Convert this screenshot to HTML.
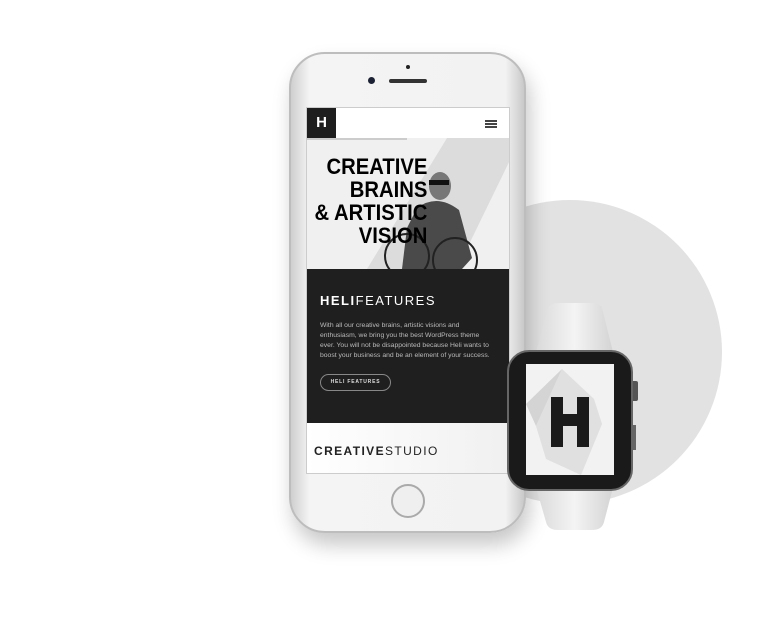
<!DOCTYPE html>
<html><head><style>
*{margin:0;padding:0;box-sizing:border-box}
body{width:783px;height:624px;background:#fff;position:relative;overflow:hidden;font-family:"Liberation Sans",sans-serif}
.a{position:absolute}
</style></head><body>
<div class="a" style="left:418px;top:200px;width:304px;height:304px;border-radius:50%;background:#e2e2e2"></div>
<!-- phone -->
<div class="a" style="left:289px;top:52px;width:237px;height:481px;border-radius:36px;background:linear-gradient(90deg,#cfcfcf,#f4f4f4 8%,#f2f2f2 92%,#c9c9c9);border:2px solid #bdbdbd;box-shadow:4px 12px 20px rgba(0,0,0,.22)"></div>
<div class="a" style="left:368px;top:77px;width:7px;height:7px;border-radius:50%;background:#1c2233"></div>
<div class="a" style="left:406px;top:65px;width:4px;height:4px;border-radius:50%;background:#222"></div>
<div class="a" style="left:389px;top:79px;width:38px;height:4px;border-radius:2px;background:#333"></div>
<div class="a" style="left:391px;top:484px;width:34px;height:34px;border-radius:50%;border:2px solid #aaa;background:#efefef"></div>
<!-- screen -->
<div class="a" style="left:306px;top:107px;width:204px;height:367px;background:#fff;overflow:hidden;border:1px solid #ccc">
 <div class="a" style="left:0;top:0;width:29px;height:30px;background:#1e1e1e;color:#fff;font-weight:bold;font-size:15px;text-align:center;line-height:30px">H</div>
 <div class="a" style="left:178px;top:12px;width:12px;height:1.5px;background:#444;box-shadow:0 3px 0 #444,0 6px 0 #444"></div>
 <div class="a" style="left:0;top:30px;width:204px;height:131px;background:#f0f0f0"></div>
 <div class="a" style="left:0;top:30px;width:100px;height:2px;background:#ccc"></div>
 <svg class="a" style="left:0;top:30px" width="204" height="131"><polygon points="140,0 204,0 204,20 150,131 60,131" fill="#dcdcdc"/>
 <ellipse cx="133" cy="48" rx="11" ry="14" fill="#777"/><path d="M110,70 Q130,55 152,72 L165,120 L155,131 L95,131 L100,90Z" fill="#4a4a4a"/>
 <circle cx="100" cy="118" r="22" fill="none" stroke="#222" stroke-width="2"/><circle cx="148" cy="122" r="22" fill="none" stroke="#222" stroke-width="2"/>
 <rect x="122" y="42" width="20" height="5" fill="#111"/></svg>
 <div class="a" style="right:82px;top:47px;white-space:nowrap;text-align:right;font-weight:bold;font-size:22.5px;line-height:23px;color:#000;transform:scaleX(.9);transform-origin:right top">CREATIVE<br>BRAINS<br>&amp; ARTISTIC<br>VISION</div>
 <div class="a" style="left:0;top:161px;width:204px;height:154px;background:#1f1f1f"></div>
 <div class="a" style="left:13px;top:185px;color:#fff;font-size:13px;letter-spacing:1.5px"><b>HELI</b><span style="font-weight:300">FEATURES</span></div>
 <div class="a" style="left:13px;top:213px;width:172px;color:#bbb;font-size:6.8px;line-height:10px">With all our creative brains, artistic visions and enthusiasm, we bring you the best WordPress theme ever. You will not be disappointed because Heli wants to boost your business and be an element of your success.</div>
 <div class="a" style="left:13px;top:266px;width:71px;height:17px;border:1px solid #888;border-radius:9px;color:#ddd;font-size:5px;font-weight:bold;letter-spacing:.8px;text-align:center;line-height:15px">HELI FEATURES</div>
 <div class="a" style="left:0;top:315px;width:204px;height:52px;background:linear-gradient(90deg,#fff,#f0f0f0)"></div>
 <div class="a" style="left:7px;top:336px;color:#222;font-size:12px;letter-spacing:1.4px"><b>CREATIVE</b><span style="font-weight:300">STUDIO</span></div>
</div>
<!-- watch -->
<svg class="a" style="left:520px;top:300px" width="110" height="235">
 <defs><linearGradient id="g" x1="0" x2="1"><stop offset="0" stop-color="#d8d8d8"/><stop offset=".5" stop-color="#f4f4f4"/><stop offset="1" stop-color="#d2d2d2"/></linearGradient></defs>
 <path d="M28,8 Q30,3 40,3 L70,3 Q80,3 82,8 L95,60 L95,180 L84,222 Q82,230 72,230 L38,230 Q28,230 26,222 L14,180 L14,60Z" fill="url(#g)"/>
</svg>
<div class="a" style="left:631px;top:381px;width:7px;height:20px;border-radius:2px;background:#555"></div>
<div class="a" style="left:632px;top:425px;width:4px;height:25px;background:#666"></div>
<div class="a" style="left:507px;top:350px;width:126px;height:141px;border-radius:22px;background:#1a1a1a;border:2px solid #666"></div>
<div class="a" style="left:526px;top:364px;width:88px;height:111px;background:#f2f2f2;overflow:hidden">
 <svg class="a" width="88" height="111"><polygon points="36,5 68,35 76,60 55,111 20,95 10,62" fill="#e0e0e0"/><polygon points="36,5 10,62 0,40" fill="#d4d4d4"/>
 <path d="M25,33 H37 V50 H51 V33 H63 V83 H51 V62 H37 V83 H25Z" fill="#1a1a1a"/></svg>
</div>
</body></html>
